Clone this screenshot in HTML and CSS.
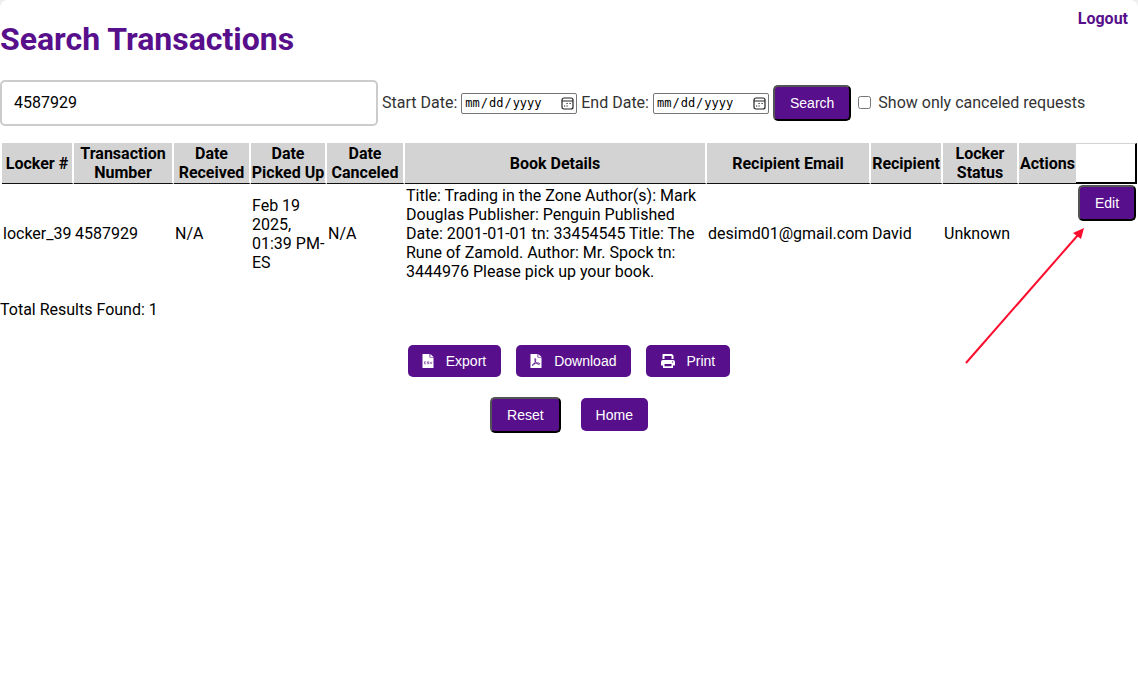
FILE: index.html
```html
<!DOCTYPE html>
<html lang="en">
<head>
<meta charset="utf-8">
<title>Search Transactions</title>
<link rel="stylesheet" href="styles.css">
</head>
<body>
<main class="page">
  <a class="logout" href="#">Logout</a>
  <h1 class="title">Search Transactions</h1>
  <form class="filters">
    <input class="search-box" type="text" value="4587929" aria-label="Search">
    <label for="start">Start Date:</label>
    <input class="date" type="date" id="start">
    <label for="end">End Date:</label>
    <input class="date" type="date" id="end">
    <button class="btn btn-raised" type="button">Search</button>
    <input class="check" type="checkbox" id="canceled">
    <label for="canceled">Show only canceled requests</label>
  </form>
  <table class="results">
    <colgroup>
      <col class="c-locker"><col class="c-number"><col class="c-received"><col class="c-picked"><col class="c-canceled"><col class="c-book"><col class="c-email"><col class="c-name"><col class="c-status"><col class="c-actions"><col class="c-edit">
    </colgroup>
    <thead>
      <tr>
        <th>Locker #</th><th>Transaction Number</th><th>Date Received</th><th>Date Picked Up</th><th>Date Canceled</th><th>Book Details</th><th>Recipient Email</th><th>Recipient</th><th>Locker Status</th><th class="th-actions">Actions</th><td class="th-blank"></td>
      </tr>
    </thead>
    <tbody>
      <tr>
        <td>locker_39</td><td>4587929</td><td>N/A</td><td>Feb 19 2025, 01:39 PM-ES</td><td>N/A</td>
        <td>Title: Trading in the Zone Author(s): Mark Douglas Publisher: Penguin Published Date: 2001-01-01 tn: 33454545 Title: The Rune of Zamold. Author: Mr. Spock tn: 3444976 Please pick up your book.</td>
        <td>desimd01@gmail.com</td><td>David</td><td>Unknown</td><td></td>
        <td class="edit-cell"><button class="btn btn-raised btn-edit" type="button">Edit</button></td>
      </tr>
    </tbody>
  </table>
  <p class="total">Total Results Found: 1</p>
  <div class="actions">
    <button class="btn btn-icon" type="button">
      <svg class="icon" viewBox="0 0 16 16" aria-hidden="true"><path fill="#fff" d="M2.500 1h7v3.500h4V15h-11z"/><path fill="#fff" d="M10.300 1l3.200 3h-3.200z"/><path fill="none" stroke="#580f8b" stroke-width=".6" d="M6 8.800H4.500v2H6M8.800 8.800H7.300v1h1.500v1H7.300M10 8.800l1 2 1-2"/></svg>
      Export</button>
    <button class="btn btn-icon" type="button">
      <svg class="icon" viewBox="0 0 16 16" aria-hidden="true"><path fill="#fff" d="M2.500 1h7v3.500h4V15h-11z"/><path fill="#fff" d="M10.300 1l3.200 3h-3.200z"/><path fill="none" stroke="#580f8b" stroke-width=".9" d="M7.300 5.500c-.8 0-.5 2 .2 3.300.7 1.200 2.200 2.700 3.700 2.500 1.300-.3.300-1.600-2-1.300-2.400.2-4.600 1-4.900 2-.2 1 1.200.7 2.200-1.400C7.500 8.700 8.200 6 7.300 5.500z"/></svg>
      Download</button>
    <button class="btn btn-icon btn-print" type="button">
      <svg class="icon" viewBox="0 0 16 16" aria-hidden="true"><path fill="#fff" fill-rule="evenodd" d="M3 1h9l1.500 1.500V6h-2V3H4.500v3h-2V1.500zM3 7h10a2 2 0 0 1 2 2v3.500h-2V15H3v-2.500H1V9a2 2 0 0 1 2-2zm1.500 4v2.200h7V11zM12 8.600v1h1.200v-1z"/></svg>
      Print</button>
  </div>
  <div class="nav">
    <button class="btn btn-raised" type="button">Reset</button>
    <a class="btn btn-home" href="#">Home</a>
  </div>
  <svg class="arrow" viewBox="0 0 120 138" aria-hidden="true"><path d="M1 136L113 8" stroke="#fb0d2e" stroke-width="2"/><path d="M119 1L116 12 112 9 108 6z" fill="#fb0d2e"/></svg>
</main>
</body>
</html>
```
FILE: styles.css
```css
* { box-sizing: border-box; }
body {
  margin: 0;
  background: #eee;
  font: 16px/19px Roboto, sans-serif;
  color: #000;
}
.page {
  position: relative;
  min-height: 100vh;
  padding-top: 20px;
  background: #fff;
  border-radius: 8px 8px 0 0;
}
.logout {
  position: absolute;
  top: 9px;
  right: 10px;
  color: #580f8b;
  font-weight: 700;
  text-decoration: none;
}
.title {
  margin: 0 0 22px;
  font-size: 32px;
  line-height: 38px;
  color: #580f8b;
}
.filters {
  display: flex;
  align-items: center;
  gap: 4px;
  color: #333;
}
.filters label { padding-bottom: 2px; }
.search-box {
  width: 378px;
  height: 46px;
  padding: 11px 12px 13px;
  border: 2px solid #ccc;
  border-radius: 5px;
  font: 16px/18px Roboto, sans-serif;
}
.date {
  width: 116px;
  height: 21px;
  padding: 0 2px;
  border: 1px solid #767676;
  border-radius: 2px;
  font: 12px "DejaVu Sans Mono", monospace;
}
.date::-webkit-calendar-picker-indicator {
  width: 13px;
  height: 13px;
  padding: 0;
  background: url("data:image/svg+xml,%3Csvg xmlns='http://www.w3.org/2000/svg' viewBox='0 0 13 13'%3E%3Crect x='1' y='1' width='11' height='11' rx='2' fill='none' stroke='%23222' stroke-width='1.2'/%3E%3Cpath d='M1 4h11M5.500 6.500h1.200M8.500 6.500h1.200M3 9h1.200M5.500 9h1.200' stroke='%23222' stroke-width='1.200'/%3E%3C/svg%3E") center / 13px no-repeat;
}
.check { margin: 0 3px 2px; }
.btn {
  display: inline-flex;
  align-items: center;
  justify-content: center;
  padding: 0 15px;
  border: 0;
  border-radius: 5px;
  background: #580f8b;
  color: #fff;
  font: 14px/16px "Liberation Sans", Arial, sans-serif;
  text-decoration: none;
}
.btn-raised {
  height: 36px;
  border: 2px outset #000;
}
.results {
  width: calc(100% - 3px);
  margin: 17px 0 0 2px;
  table-layout: fixed;
  border-spacing: 0;
}
.c-locker { width: 72px; }
.c-number { width: 100px; }
.c-received { width: 77px; }
.c-picked { width: 76px; }
.c-canceled { width: 78px; }
.c-email { width: 164px; }
.c-name { width: 72px; }
.c-status { width: 76px; }
.c-actions { width: 57px; }
.c-edit { width: 61px; }
.results th {
  padding: 1px 0;
  border-right: 2px solid #fff;
  border-bottom: 1px solid #111;
  background: #d3d3d3;
}
.results .th-actions { border-right: 0; }
.results .th-blank {
  border-top: 1px solid #d3d3d3;
  border-right: 2px solid #000;
  border-bottom: 2px solid #000;
}
.results td { padding: 2px 0 2px 1px; }
.results .edit-cell {
  padding: 1px 0 0 2px;
  vertical-align: top;
}
.btn-edit { width: 58px; }
.total { margin: 17px 0 26px; }
.actions, .nav {
  display: flex;
  justify-content: center;
  gap: 15px;
}
.nav {
  align-items: flex-start;
  gap: 20px;
  margin-top: 20px;
}
.btn-icon {
  height: 32px;
  gap: 10px;
  padding: 0 15px 0 12px;
}
.btn-print { padding-left: 14px; }
.icon {
  width: 16px;
  height: 16px;
}
.btn-home {
  height: 33px;
  margin-top: 1px;
}
.arrow {
  position: absolute;
  top: 227px;
  right: 53px;
  width: 120px;
  height: 138px;
}
```
